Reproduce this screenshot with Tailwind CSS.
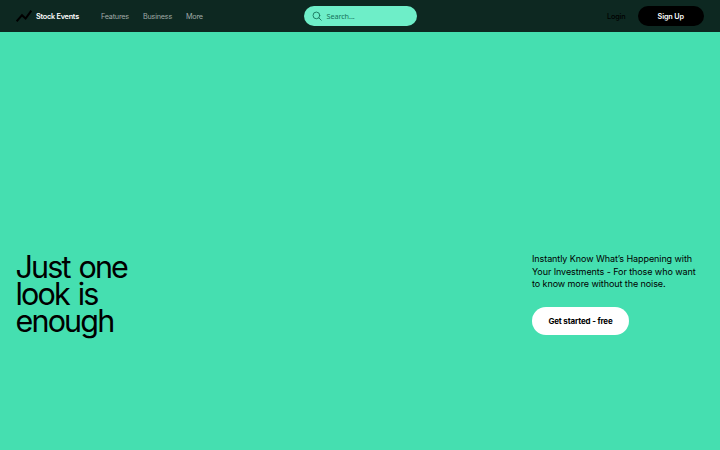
<!DOCTYPE html>
<html lang="en">

<head>
    <meta charset="UTF-8">
    <meta name="viewport" content="width=device-width, initial-scale=1.0">
    <title>Stock Events</title>
    <script src="https://cdn.jsdelivr.net/npm/@tailwindcss/browser@4"></script>
</head>

<body class="flex h-screen flex-col overflow-hidden bg-[#45dfb0] font-['Inter',sans-serif] text-black">
    <!-- Header -->
    <header class="grid h-8 shrink-0 grid-cols-[1fr_113px_1fr] items-center bg-[#0d2821] px-4 text-[7.25px] leading-[8px] tracking-[-0.01em]">
        <div class="flex items-center">
            <a href="#" class="flex items-center gap-1">
                <svg class="h-4 w-4" viewBox="0 0 16 16" fill="none" stroke="#000" stroke-width="2">
                    <path d="M.7 13.3 6 7.2l3.6 3.3 5.7-7.8" />
                </svg>
                <span class="w-[43px] pt-px font-semibold tracking-[-0.03em] whitespace-nowrap text-white">Stock Events</span>
            </a>
            <nav class="ml-[22px] flex gap-3.5 pt-px tracking-[-0.03em] text-[#a0aaa7]">
                <a href="#">Features</a>
                <a href="#">Business</a>
                <a href="#">More</a>
            </nav>
        </div>

        <!-- Search -->
        <label class="flex h-5 items-center gap-1 rounded-full bg-[#6eeec8] pl-2 text-[#16735a]">
            <svg class="h-2.5 w-2.5" viewBox="0 0 20 20" fill="none" stroke="currentColor" stroke-width="1.8" stroke-linecap="round">
                <circle cx="8.8" cy="8.8" r="6.7" />
                <path d="m13.8 13.8 4.7 4.7" />
            </svg>
            <span class="pl-px font-['Noto_Sans',sans-serif] text-[7.25px]">Search...</span>
        </label>

        <div class="flex items-center justify-end gap-3">
            <a href="#" class="pt-px font-medium tracking-[-0.02em] text-black">Login</a>
            <a href="#" class="flex h-5 w-[66.5px] items-center justify-center rounded-full bg-black pt-px font-semibold tracking-[-0.02em] text-white">Sign Up</a>
        </div>
    </header>

    <!-- Hero -->
    <main class="flex flex-1 items-start justify-between pt-[221px] pr-[22px] pl-[15.5px]">
        <h1 class="w-[140px] text-[30.5px] leading-[27px] tracking-[-0.06em] [word-spacing:2px]">Just one look is enough</h1>
        <div class="w-[166px]">
            <p class="text-[9px] leading-[12.5px] tracking-[-0.009em]">Instantly Know What’s Happening with Your Investments - For those who want to know more without the noise.</p>
            <a href="#" class="mt-4 flex h-7 w-[97px] items-center justify-center rounded-full bg-white text-[8px] font-bold tracking-[-0.02em]">Get started - free</a>
        </div>
    </main>
</body>

</html>
